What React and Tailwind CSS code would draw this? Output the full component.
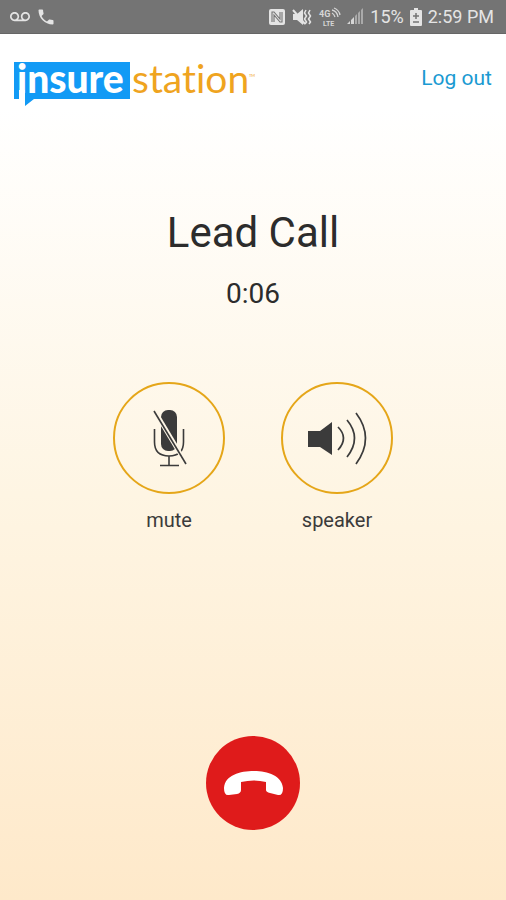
import React from 'react';
import { MdPhone, MdVoicemail } from 'react-icons/md';

const Logo = () => (
  <svg viewBox="0 0 244 60" className="w-[244px] shrink-0" role="img" aria-label="insurestation">
    <path d="M0 10H116V47H20L11 54V47H0Z" fill="#129af5" />
    <text x="3" y="41" fontFamily="Lato, sans-serif" fontWeight="900" fontSize="39" fill="#fff">insure</text>
    <path d="M5 38H11V48H5Z" fill="#fff" />
    <text x="118" y="41" fontFamily="Lato, sans-serif" fontSize="39" fill="#efa41f" style={{ fontVariantLigatures: 'none' }}>station</text>
    <text x="235" y="25" fontFamily="Lato, sans-serif" fontSize="4" fill="#efa41f">TM</text>
  </svg>
);

const NfcIcon = () => (
  <svg viewBox="0 0 18 18" className="w-[18px]" fill="none">
    <rect x="1" y="1" width="16" height="16" rx="2" fill="#e4e4e4" />
    <path d="M4 14V4H6L12 11V4M14 4V14H12L6 7V14" stroke="#747474" strokeWidth="1.1" />
  </svg>
);

const VibrateIcon = () => (
  <svg viewBox="0 0 20 18" className="w-5" fill="none" stroke="#e4e4e4">
    <path d="M1 6H5L11 1V17L5 12H1Z" fill="#e4e4e4" stroke="none" />
    <path d="M1 2L13 16" strokeWidth="2" />
    <path d="M14 2L12.5 5L14.5 8L12.5 11L14.5 14L13 16M18 2L16.5 5L18.5 8L16.5 11L18.5 14L17 16" strokeWidth="1.5" />
  </svg>
);

const LteIcon = () => (
  <svg viewBox="0 0 23 20" className="w-[23px]" fill="none" stroke="#d6d6d6">
    <text x="1" y="10" fontFamily="Roboto, sans-serif" fontWeight="700" fontSize="9" fill="#d6d6d6" stroke="none">4G</text>
    <text x="5" y="19" fontFamily="Roboto, sans-serif" fontWeight="700" fontSize="7" fill="#d6d6d6" stroke="none">LTE</text>
    <path d="M14 3Q19 4 20 10M16 1Q21 3 22 8M14 6Q16 7 17 10" strokeWidth="1.3" />
  </svg>
);

const SignalIcon = () => (
  <svg viewBox="0 0 17 17" className="w-[17px]">
    <path d="M0 16L3 13V16ZM4 12L7 9V16H4Z" fill="#d6d6d6" />
    <path d="M8 8L10 6V16H8ZM11 5L13 3V16H11ZM14 2L16 0V16H14Z" fill="#aaa" />
  </svg>
);

const BatteryIcon = () => (
  <svg viewBox="0 0 12 18" className="w-3">
    <path d="M4 0H8V2H11Q12 2 12 3V17Q12 18 11 18H1Q0 18 0 17V3Q0 2 1 2H4Z" fill="#e4e4e4" />
    <path d="M6 5V11M3 8H9M3 14H9" stroke="#747474" strokeWidth="1.5" />
  </svg>
);

const MicOffIcon = () => (
  <svg viewBox="0 0 112 112" className="w-28" fill="none" stroke="#3b3b3b">
    <rect x="48" y="28" width="16" height="41" rx="7" fill="#3b3b3b" stroke="none" />
    <path d="M41.5 47V60Q41.5 74 56 74Q70.5 74 70.5 60V47M56 74V83M47 83.5H66" strokeWidth="1.6" />
    <path d="M41 28L74 83" stroke="#fef6e6" strokeWidth="4.5" />
    <path d="M41 29L73 82" strokeWidth="1.6" />
  </svg>
);

const SpeakerIcon = () => (
  <svg viewBox="0 0 112 112" className="w-28" fill="none" stroke="#3b3b3b" strokeWidth="1.7">
    <path d="M27 49H39L51 40V73L39 65H27Z" fill="#3b3b3b" stroke="none" />
    <path d="M57 45Q68 56 57 68M66 38Q81 56 66 75M75 31Q94 56 75 82" />
  </svg>
);

const HangUpIcon = () => (
  <svg viewBox="0 0 94 94" className="w-[94px]">
    <path d="M18 52C19 39 34 35 48 35C62 35 76 40 77 52Q77 60 72 59L64 57Q60 56 60 54V46Q48 43 35 46V54Q35 57 31 58L23 59Q18 60 18 52Z" fill="#fff" />
  </svg>
);

const controls = [
  { label: 'mute', icon: <MicOffIcon /> },
  { label: 'speaker', icon: <SpeakerIcon /> }
];

const App = () => {
  return (
    <div className="min-h-screen flex flex-col bg-linear-to-b from-white from-12% via-[#fef5e3] via-55% to-[#fee9ca] font-[Roboto,sans-serif] text-[#2c2c2c]">
      {/* Status bar */}
      <div className="h-[34px] shrink-0 flex items-center justify-between bg-[#747474] border-b border-[#666] pl-2.5 pr-3 text-[#e4e4e4]">
        <div className="flex items-center gap-1.5">
          <MdVoicemail className="w-5 h-5" />
          <MdPhone className="w-5 h-5" />
        </div>
        <div className="flex items-center gap-1.5 text-lg whitespace-nowrap">
          <NfcIcon />
          <VibrateIcon />
          <LteIcon />
          <SignalIcon />
          <span>15%</span>
          <BatteryIcon />
          <span>2:59 PM</span>
        </div>
      </div>

      <header className="flex items-start justify-between pt-[18px] px-3.5">
        <Logo />
        <a href="#logout" className="pt-3 text-[21px] leading-7 text-[#1b9ad2]">Log out</a>
      </header>

      <main className="grow flex flex-col items-center pt-24 pb-[70px]">
        <h1 className="text-[42px] leading-[50px]">Lead Call</h1>
        <p className="mt-5 text-[28px] leading-8">0:06</p>

        <div className="mt-[72px] flex gap-14">
          {controls.map((control) => (
            <button key={control.label} className="flex flex-col items-center gap-3">
              <span className="rounded-full outline-2 -outline-offset-2 outline-[#e5a619]">
                {control.icon}
              </span>
              <span className="text-xl text-[#3b3b3b]">{control.label}</span>
            </button>
          ))}
        </div>

        <button aria-label="End call" className="mt-auto rounded-full bg-[#df1b1b]">
          <HangUpIcon />
        </button>
      </main>
    </div>
  );
};

export default App;
